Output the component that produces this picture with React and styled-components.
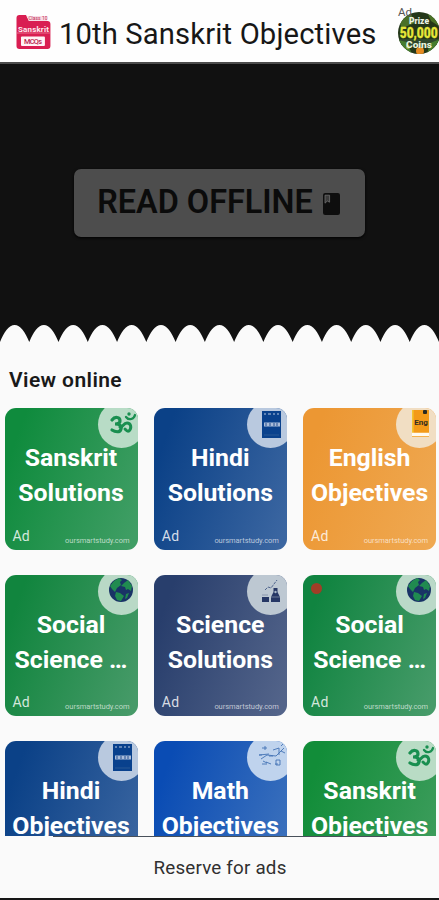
import React from "react";
import styled, { createGlobalStyle } from "styled-components";

const Global = createGlobalStyle`
  *, *::before, *::after { box-sizing: border-box; }
  body { margin: 0; background: #fafafa; font-family: Roboto, "Liberation Sans", sans-serif; }
`;

const Screen = styled.div`
  width: 439px;
  height: 900px;
  display: flex;
  flex-direction: column;
  overflow: hidden;
  background: #fafafa;
`;

const Header = styled.header`
  flex: none;
  height: 64px;
  display: flex;
  align-items: center;
  padding: 4px 0 0 16px;
  background: #fefefe;
  border-bottom: 2px solid #4c4c4c;
`;

const Title = styled.h1`
  margin: 2px 0 0 7px;
  width: 340px;
  font-size: 29.2px;
  font-weight: 400;
  line-height: 40px;
  letter-spacing: 0.15px;
  white-space: nowrap;
  color: #171717;
`;

const PrizeAd = styled.div`
  flex: none;
  position: relative;
  width: 41px;
  height: 42px;
  & > svg { display: block; }
`;

const PrizeLabel = styled.span`
  position: absolute;
  left: 0;
  top: -7px;
  font-size: 11.5px;
  line-height: 14px;
  color: #555;
`;

const Hero = styled.section`
  flex: none;
  height: 261px;
  display: flex;
  justify-content: center;
  align-items: flex-start;
  padding-top: 105px;
  background: #111;
`;

const OfflineButton = styled.button`
  width: 291px;
  height: 68px;
  display: flex;
  align-items: center;
  justify-content: center;
  gap: 10px;
  padding: 0 2px 2px 0;
  border: 0;
  border-radius: 7px;
  background: #4d4d4d;
  box-shadow: 0 1px 3px #000;
  font-family: inherit;
  font-size: 32.4px;
  font-weight: 600;
  line-height: 38px;
  white-space: nowrap;
  color: #0b0b0b;
  & > svg { position: relative; top: 2px; }
`;

const Scallop = styled.svg`
  flex: none;
  display: block;
  width: 439px;
  height: 17px;
`;

const SectionTitle = styled.h2`
  flex: none;
  margin: 0;
  padding: 23px 0 0 9px;
  height: 66px;
  font-size: 21px;
  font-weight: 600;
  line-height: 30px;
  letter-spacing: 0.4px;
  color: #191919;
`;

const Grid = styled.main`
  flex: none;
  height: 428px;
  overflow: hidden;
  display: grid;
  grid-template-columns: repeat(3, 133px);
  grid-auto-rows: 141.5px;
  gap: 25px 16.3px;
  padding-left: 4.5px;
`;

const Tile = styled.article`
  position: relative;
  overflow: hidden;
  display: flex;
  flex-direction: column;
  justify-content: space-between;
  padding: 32px 8px 5px;
  border-radius: 11px;
  background: linear-gradient(110deg, ${(p) => p.$from} 12%, ${(p) => p.$to} 95%);
  color: #fff;
`;

const TileTitle = styled.h3`
  margin: 0 -8px;
  font-size: 24.8px;
  font-weight: 700;
  line-height: 35px;
  text-align: center;
  letter-spacing: 0;
  white-space: pre;
`;

const TileFooter = styled.footer`
  display: flex;
  justify-content: space-between;
  align-items: flex-end;
`;

const AdTag = styled.span`
  font-size: 14px;
  line-height: 18px;
  letter-spacing: 0.2px;
  color: rgba(255, 255, 255, 0.82);
`;

const Site = styled.span`
  font-size: 7.5px;
  line-height: 9px;
  letter-spacing: -0.05px;
  color: rgba(255, 255, 255, 0.66);
`;

const Badge = styled.span`
  position: absolute;
  top: -7px;
  right: -7px;
  width: 47px;
  height: 47px;
  border-radius: 50%;
  background: ${(p) => p.$color};
  & > svg { display: block; width: 47px; height: 47px; }
`;

const AlertDot = styled.span`
  position: absolute;
  top: 8px;
  left: 8px;
  width: 11px;
  height: 11px;
  border-radius: 50%;
  background: #a03e27;
`;

const BottomBar = styled.footer`
  flex: none;
  height: 64px;
  display: flex;
  flex-direction: column;
  align-items: center;
  border-bottom: 2px solid #161616;
  background: #fafafa;
`;

const Rule = styled.div`
  width: 334px;
  height: 1px;
  background: #48505a;
`;

const Reserve = styled.p`
  margin: 19px 0 0 1px;
  font-size: 18.8px;
  line-height: 24px;
  letter-spacing: 0.2px;
  white-space: nowrap;
  color: #303030;
`;

function Logo() {
  return (
    <svg width="36" height="36" viewBox="0 0 36 36">
      <path d="M3.5 0H10l3 6h18.5a3 3 0 0 1 3 3v22a3 3 0 0 1-3 3h-28a3 3 0 0 1-3-3V3a3 3 0 0 1 3-3Z" fill="#d91e52" />
      <path d="M11 1h20v5H13Z" fill="#f8dce4" />
      <g fontFamily="Roboto, sans-serif" textAnchor="middle">
        <text x="22" y="5" fontSize="5" fill="#c22d58">Class 10</text>
        <text x="17.5" y="16.5" fontSize="8" fontWeight="700" fill="#ffe9ef" textLength="31">Sanskrit</text>
        <path d="M1 18H34" stroke="#ed90a9" strokeWidth=".7" />
        <rect x="5" y="21.5" width="24" height="9.5" rx="1" fill="#fff3f6" />
        <text x="17" y="29" fontSize="7.4" fontWeight="500" fill="#bc2450" textLength="18">MCQs</text>
      </g>
    </svg>
  );
}

function Prize() {
  return (
    <svg width="41" height="42" viewBox="0 0 41 42">
      <defs>
        <clipPath id="coin"><circle cx="21" cy="21" r="21" /></clipPath>
      </defs>
      <g clipPath="url(#coin)">
        <rect width="42" height="42" fill="#243719" />
        <path d="M0 8 12 0 17 11 4 16ZM29 0 42 8v7L33 9Z" fill="#4a7127" />
        <path d="M0 27h42v6H0Z" fill="#31482d" />
        <path d="M0 28 9 30 14 42H0ZM32 31l10-4v15H29Z" fill="#467c2e" />
        <circle cx="22" cy="39" r="4" fill="#e58b22" />
        <circle cx="10" cy="35" r="2" fill="#a3b33c" />
        <g fontFamily="Roboto, sans-serif" fontWeight="900" textAnchor="middle">
          <text x="21" y="12" fontSize="8.5" fill="#edf2e4">Prize</text>
          <text x="20.7" y="26" fontSize="15.5" fill="#e6e638" stroke="#e6e638" strokeWidth=".3" textLength="38" lengthAdjust="spacingAndGlyphs">50,000</text>
          <text x="21" y="36" fontSize="8.5" fill="#e9f2dc" textLength="26" lengthAdjust="spacingAndGlyphs">Coins</text>
        </g>
      </g>
    </svg>
  );
}

function BookIcon() {
  return (
    <svg width="17" height="22" viewBox="0 0 17 22">
      <rect width="17" height="22" rx="2.2" fill="#0e0e0e" />
      <path d="M2 2.2h4.6v7L4.3 8 2 10.2Z" fill="#3c3c3c" stroke="#707070" strokeWidth=".8" />
    </svg>
  );
}

function Om() {
  return (
    <svg viewBox="0 0 47 47" fill="none" stroke="#198f50" strokeLinecap="round">
      <path d="M14 19c3-4 8-3 8 1 0 2-2 3-5 3 5 0 7 2 6 5-1 4-6 3-9 1" strokeWidth="3.2" />
      <path d="M22 26c3 1 3-4 7-4 4 0 5 5 2 8-2 1-3-1-4-2" strokeWidth="3" />
      <path d="M28 16c3 4 8 2 9-2" strokeWidth="2.3" />
      <circle cx="31" cy="13" r="1.7" fill="#198f50" stroke="none" />
    </svg>
  );
}

function HindiBook() {
  return (
    <svg viewBox="0 0 47 47">
      <rect x="15" y="10" width="19" height="27" fill="#09418d" />
      <path d="M17 13h2m2 0h3m2 0h2m2 0h2" stroke="#7d9ac4" strokeWidth="1.3" />
      <path d="M17 23.5h16" stroke="#aabdda" strokeWidth="4" />
      <path d="M19 22v3m4-3v3m4-3v3m3-3v3" stroke="#244f90" strokeWidth="1" />
      <path d="M17 34h15" stroke="#315d98" strokeWidth=".8" />
    </svg>
  );
}

function EnglishBook() {
  return (
    <svg viewBox="0 0 47 47">
      <rect x="16" y="9" width="17" height="27" fill="#f39a19" />
      <path d="M16.8 9v23" stroke="#f4c32f" strokeWidth="1.6" />
      <rect x="27" y="9" width="4" height="4" rx="1" fill="#292a23" />
      <path d="M16 33.5h17" stroke="#fffaf0" strokeWidth="3.5" />
      <text x="25" y="24" textAnchor="middle" fontFamily="Roboto, sans-serif" fontSize="8" fontWeight="700" fill="#322d20">Eng</text>
    </svg>
  );
}

function Globe() {
  return (
    <svg viewBox="0 0 47 47">
      <circle cx="23" cy="22" r="12" fill="#193366" />
      <path d="m16 13 5-3 3 2-2 2 1 3-4 3-2 4-3-3-2-3ZM26 15l4-3 4 6-1 5-3-2-2 1-1-3-4-1ZM18 24l4 1 4 3-3 5-4-1-2-4ZM28 26l3-1-2 5-2 1Z" fill="#208b50" />
    </svg>
  );
}

function Lab() {
  return (
    <svg viewBox="0 0 47 47" fill="#263765">
      <path d="M15 29h7v5h-7ZM24 29h9v5h-9ZM26.500 20h4v4l2.500 5h-9l2.500-5Z" />
      <path d="m18 22 3-3 3 1 6-8" fill="none" stroke="#50658d" strokeWidth="1" strokeDasharray="3 1" />
      <path d="M15 27h6M24 29h9" stroke="#7d8aa4" strokeWidth=".8" />
      <circle cx="28.5" cy="24" r="1.2" fill="#a9b9c8" />
    </svg>
  );
}

function MathMarks() {
  return (
    <svg viewBox="0 0 47 47" fill="none" stroke="#4373b4" strokeWidth=".9">
      <path d="M15 14h5m-2-2v4m-6 5 10-1m-8 5 6-4 9 1 8-8m-11 2 6-2v7m-17 9h5m-1-2 5 2m5-4h4v5h-4Zm5-9 4 2M12 21h3m7 1h4" />
      <path d="m34 12 2-2M16 27l4 2m8 1h3" />
    </svg>
  );
}

const icons = { om: Om, hindi: HindiBook, english: EnglishBook, globe: Globe, lab: Lab, math: MathMarks };

const tiles = [
  { title: "Sanskrit\nSolutions", icon: "om", from: "#0f8b3d", to: "#409e65", badge: "#b8dcc6" },
  { title: "Hindi\nSolutions", icon: "hindi", from: "#0b4187", to: "#3b66a1", badge: "#b9c9df" },
  { title: "English\nObjectives", icon: "english", from: "#ec9733", to: "#efa851", badge: "#f1dec3" },
  { title: "Social\nScience …", icon: "globe", from: "#11853e", to: "#469a68", badge: "#b9d9c6" },
  { title: "Science\nSolutions", icon: "lab", from: "#283e6c", to: "#53648a", badge: "#bdc8d2" },
  { title: "Social\nScience …", icon: "globe", from: "#108440", to: "#469b69", badge: "#bad9c8", alert: true },
  { title: "Hindi\nObjectives", icon: "hindi", from: "#0b4187", to: "#3b66a1", badge: "#b9c9df" },
  { title: "Math\nObjectives", icon: "math", from: "#0a4cb4", to: "#3d72bd", badge: "#bfd3ed" },
  { title: "Sanskrit\nObjectives", icon: "om", from: "#128d39", to: "#3e9d5d", badge: "#b9dcc5" },
];

const scallopPath = (() => {
  const step = 439 / 15;
  let d = "M0 17";
  for (let i = 0; i < 15; i++) {
    const x = i * step;
    d += `C${x + 4} 7 ${x + 9} 0 ${x + step / 2} 0S${x + step - 4} 7 ${x + step} 17`;
  }
  return d + "Z";
})();

export default function App() {
  return (
    <Screen>
      <Global />
      <Header>
        <Logo />
        <Title>10th Sanskrit Objectives</Title>
        <PrizeAd>
          <Prize />
          <PrizeLabel>Ad</PrizeLabel>
        </PrizeAd>
      </Header>
      <Hero>
        <OfflineButton>
          READ OFFLINE
          <BookIcon />
        </OfflineButton>
      </Hero>
      <Scallop viewBox="0 0 439 17">
        <rect width="439" height="17" fill="#111" />
        <path d={scallopPath} fill="#fafafa" />
      </Scallop>
      <SectionTitle>View online</SectionTitle>
      <Grid>
        {tiles.map((tile, i) => {
          const Icon = icons[tile.icon];
          return (
            <Tile key={i} $from={tile.from} $to={tile.to}>
              <Badge $color={tile.badge}><Icon /></Badge>
              {tile.alert && <AlertDot />}
              <TileTitle>{tile.title}</TileTitle>
              <TileFooter>
                <AdTag>Ad</AdTag>
                <Site>oursmartstudy.com</Site>
              </TileFooter>
            </Tile>
          );
        })}
      </Grid>
      <BottomBar>
        <Rule />
        <Reserve>Reserve for ads</Reserve>
      </BottomBar>
    </Screen>
  );
}
